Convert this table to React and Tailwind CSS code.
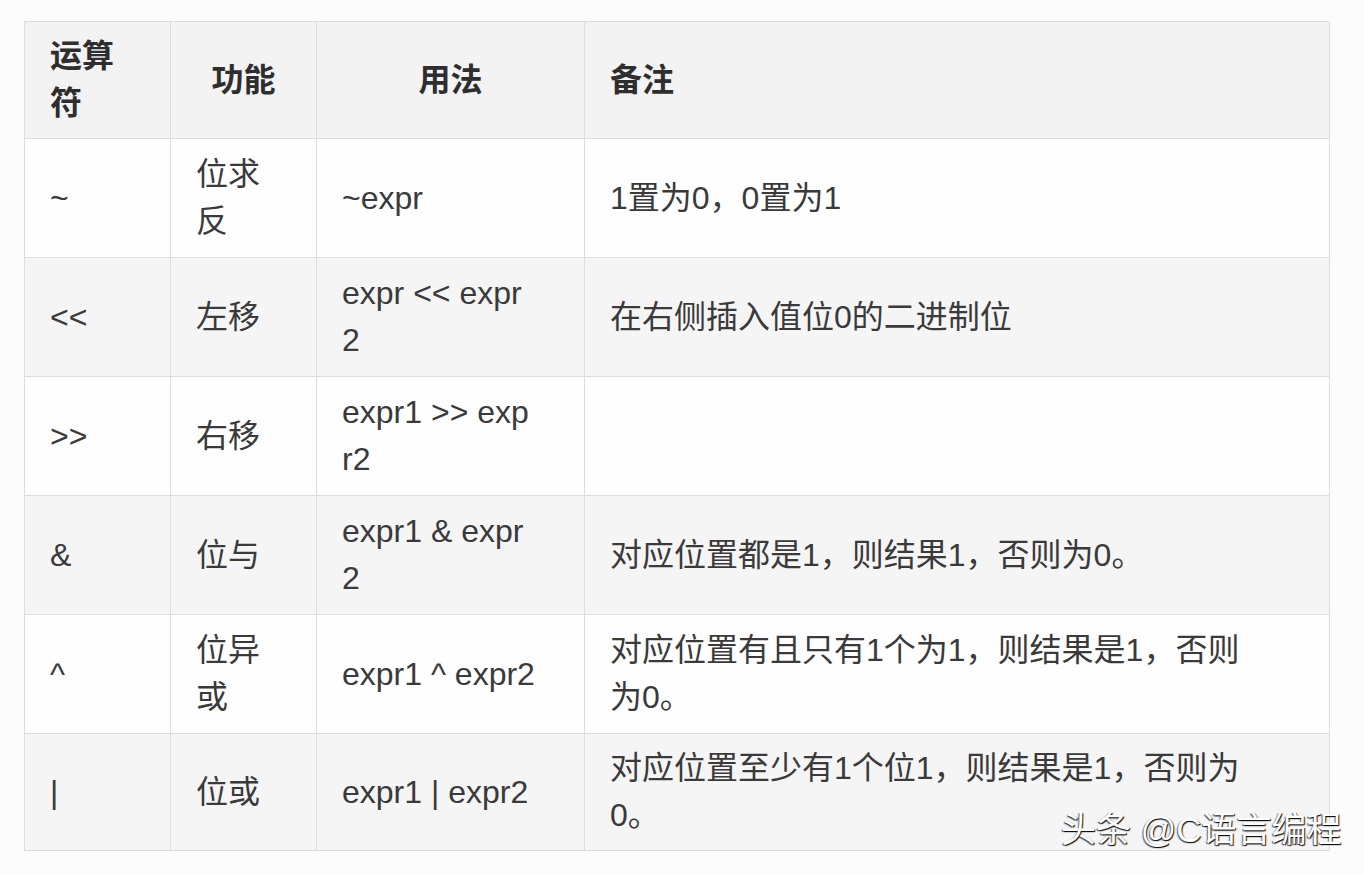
import React from 'react'

const rows = [
  { op: ['~'], fn: ['位求', '反'], use: ['~expr'], note: ['1置为0，0置为1'] },
  { op: ['<<'], fn: ['左移'], use: ['expr << expr', '2'], note: ['在右侧插入值位0的二进制位'] },
  { op: ['>>'], fn: ['右移'], use: ['expr1 >> exp', 'r2'], note: [] },
  { op: ['&'], fn: ['位与'], use: ['expr1 & expr', '2'], note: ['对应位置都是1，则结果1，否则为0。'] },
  { op: ['^'], fn: ['位异', '或'], use: ['expr1 ^ expr2'], note: ['对应位置有且只有1个为1，则结果是1，否则', '为0。'] },
  { op: ['|'], fn: ['位或'], use: ['expr1 | expr2'], note: ['对应位置至少有1个位1，则结果是1，否则为', '0。'] },
]

const Lines = ({ items }) =>
  items.map((t, i) => (
    <div key={i} className="whitespace-pre">
      {t}
    </div>
  ))

const App = () => {
  return (
    <div
      className="relative w-[1364px] h-[874px] bg-[#fcfcfc] pt-[21px] pl-[24px]"
      style={{ fontFamily: '"Liberation Sans", "Noto Sans CJK SC", sans-serif' }}
    >
      <div className="w-[1305px] border-t border-l border-[#dcdde0] text-[32px] leading-[47px] text-[#3a3a3a]">
        {/* Header */}
        <div className="grid grid-cols-[146px_146px_268px_745px] h-[117px] bg-[#f3f3f3] font-bold text-[#2e2e2e]">
          <div className="flex items-center px-[25px] border-r border-b border-[#dcdde0]">
            <div>
              <div>运算</div>
              <div>符</div>
            </div>
          </div>
          <div className="flex items-center justify-center border-r border-b border-[#dcdde0]">功能</div>
          <div className="flex items-center justify-center border-r border-b border-[#dcdde0]">用法</div>
          <div className="flex items-center px-[25px] border-r border-b border-[#dcdde0]">备注</div>
        </div>

        {rows.map((r, i) => (
          <div
            key={i}
            className={`grid grid-cols-[146px_146px_268px_745px] ${i === 5 ? 'h-[117px]' : 'h-[119px]'} ${i % 2 === 0 ? 'bg-[#fefefe]' : 'bg-[#f5f5f5]'}`}
          >
            <div className="flex items-center px-[25px] border-r border-b border-[#dcdde0]">
              <div>
                <Lines items={r.op} />
              </div>
            </div>
            <div className="flex items-center px-[25px] border-r border-b border-[#dcdde0]">
              <div>
                <Lines items={r.fn} />
              </div>
            </div>
            <div className="flex items-center px-[25px] border-r border-b border-[#dcdde0]">
              <div>
                <Lines items={r.use} />
              </div>
            </div>
            <div className="flex items-center px-[25px] border-r border-b border-[#dcdde0]">
              <div>
                <Lines items={r.note} />
              </div>
            </div>
          </div>
        ))}
      </div>

      {/* watermark */}
      <div className="absolute left-[1061px] top-[806px] text-[35px] leading-[48px] text-white whitespace-nowrap [text-shadow:1px_1px_1px_rgba(0,0,0,0.95),-1px_1px_1px_rgba(0,0,0,0.6)]">
        头条 @C语言编程
      </div>
    </div>
  )
}

export default App
